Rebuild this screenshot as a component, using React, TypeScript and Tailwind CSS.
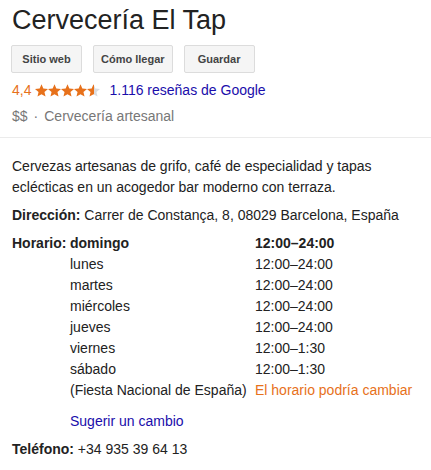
import React from "react";

const font = { fontFamily: '"Liberation Sans", Arial, sans-serif' };

function Star({ fill }: { fill: number }) {
  const id = `g${Math.round(fill * 100)}`;
  return (
    <svg width="13" height="13" viewBox="1 1 22 22" className="block">
      <defs>
        <linearGradient id={id} x1="0" x2="1" y1="0" y2="0">
          <stop offset={fill} stopColor="#e7711b" />
          <stop offset={fill} stopColor="#dadce0" />
        </linearGradient>
      </defs>
      <path
        d="M12 1.5l3.1 7.2 7.9.7-6 5.2 1.8 7.7L12 18.2l-6.8 4.1 1.8-7.7-6-5.2 7.9-.7z"
        fill={`url(#${id})`}
      />
    </svg>
  );
}

const hours: [string, string][] = [
  ["lunes", "12:00–24:00"],
  ["martes", "12:00–24:00"],
  ["miércoles", "12:00–24:00"],
  ["jueves", "12:00–24:00"],
  ["viernes", "12:00–1:30"],
  ["sábado", "12:00–1:30"],
];

export default function App() {
  return (
    <div className="w-[431px] h-[470px] bg-white text-[#222] overflow-hidden" style={font}>
      <div className="pl-[11px] pt-[4px]">
        <div className="text-[27px] leading-[32px] text-[#222] pl-[1px]">Cervecería El Tap</div>
        <div className="flex gap-[11px] mt-[9px]">
          {["Sitio web", "Cómo llegar", "Guardar"].map((b) => (
            <div
              key={b}
              className="h-[28px] min-w-[71px] flex items-center justify-center px-[7px] bg-[#f5f5f5] border border-[#dcdcdc] rounded-[2px] text-[11px] font-bold text-[#444]"
            >
              {b}
            </div>
          ))}
        </div>
        <div className="flex items-center mt-[6px] h-[22px] text-[14px]">
          <span className="text-[#e7711b] pl-[1px]">4,4</span>
          <span className="flex ml-[4px]">
            <Star fill={1} />
            <Star fill={1} />
            <Star fill={1} />
            <Star fill={1} />
            <Star fill={0.55} />
          </span>
          <span className="ml-[9px] text-[#1a0dab]">1.116 reseñas de Google</span>
        </div>
        <div className="text-[14px] text-[#777] mt-[4px] h-[22px] flex items-center pl-[1px]">
          <span>$$</span>
          <span className="mx-[6px]">·</span>
          <span>Cervecería artesanal</span>
        </div>
      </div>
      <div className="h-px bg-[#ebebeb] mt-[10px]" />
      <div className="pl-[12px] pt-[18px] text-[14px] text-[#222]">
        <div className="leading-[21px]">
          Cervezas artesanas de grifo, café de especialidad y tapas eclécticas en un acogedor bar moderno con terraza.
        </div>
        <div className="mt-[7px] leading-[21px]">
          <span className="font-bold">Dirección:</span> Carrer de Constança, 8, 08029 Barcelona, España
        </div>
        <div className="mt-[7px] grid grid-cols-[58px_185px_auto] leading-[21px]">
          <span className="font-bold">Horario:</span>
          <span className="font-bold">domingo</span>
          <span className="font-bold">12:00–24:00</span>
          {hours.map(([d, h]) => (
            <React.Fragment key={d}>
              <span />
              <span>{d}</span>
              <span>{h}</span>
            </React.Fragment>
          ))}
          <span />
          <span className="whitespace-nowrap">(Fiesta Nacional de España)</span>
          <span className="text-[#e7711b] whitespace-nowrap">El horario podría cambiar</span>
        </div>
        <div className="pl-[58px] mt-[10px] leading-[21px] text-[#1a0dab]">Sugerir un cambio</div>
        <div className="mt-[7px] leading-[21px]">
          <span className="font-bold">Teléfono:</span> +34 935 39 64 13
        </div>
      </div>
    </div>
  );
}
